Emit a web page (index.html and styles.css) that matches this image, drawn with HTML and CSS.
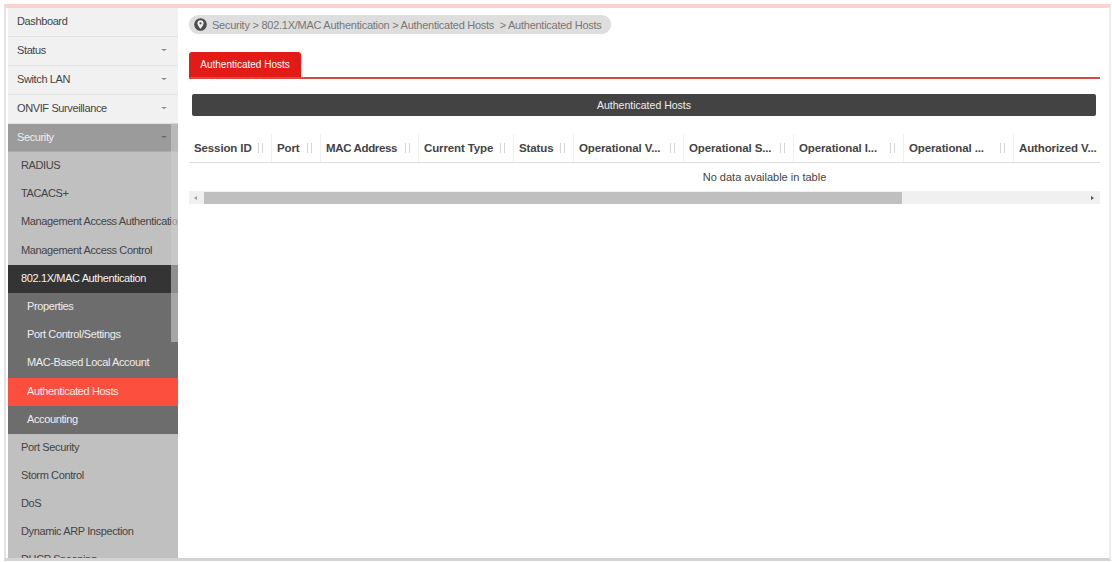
FILE: index.html
```html
<!DOCTYPE html>
<html lang="en">

<head>
    <meta charset="UTF-8">
    <meta name="viewport" content="width=device-width, initial-scale=1.0">
    <title>Authenticated Hosts</title>
    <link rel="stylesheet" href="styles.css">
</head>

<body>
    <div class="frame">
        <nav class="sidebar">
            <ul class="menu">
                <li><span>Dashboard</span></li>
                <li><span>Status</span><i class="caret"></i></li>
                <li><span>Switch LAN</span><i class="caret"></i></li>
                <li><span>ONVIF Surveillance</span><i class="caret"></i></li>
                <li class="open"><span>Security</span><i class="caret"></i></li>
            </ul>
            <ul class="submenu">
                <li>RADIUS</li>
                <li>TACACS+</li>
                <li>Management Access Authentication</li>
                <li>Management Access Control</li>
                <li class="current">802.1X/MAC Authentication</li>
                <li class="sub">Properties</li>
                <li class="sub">Port Control/Settings</li>
                <li class="sub">MAC-Based Local Account</li>
                <li class="sub active">Authenticated Hosts</li>
                <li class="sub">Accounting</li>
                <li>Port Security</li>
                <li>Storm Control</li>
                <li>DoS</li>
                <li>Dynamic ARP Inspection</li>
                <li class="last">DHCP Snooping</li>
            </ul>
            <div class="thumb"></div>
        </nav>

        <main class="content">
            <div class="crumbs">
                <svg width="13" height="13" viewBox="0 0 13 13">
                    <circle cx="6.5" cy="6.5" r="6.3" fill="#4c4c4c" />
                    <path d="M6.5 2.2a3.1 3.1 0 0 0-3.1 3.1c0 2.1 3.1 5.6 3.1 5.6s3.1-3.5 3.1-5.6a3.1 3.1 0 0 0-3.1-3.1z" fill="#eee" />
                    <circle cx="6.5" cy="5.3" r="1.1" fill="#4c4c4c" />
                </svg>
                <span>Security &gt; 802.1X/MAC Authentication &gt; Authenticated Hosts &nbsp;&gt; Authenticated Hosts</span>
            </div>

            <div class="tabs">
                <div class="tab">Authenticated Hosts</div>
            </div>

            <div class="title">Authenticated Hosts</div>

            <div class="table">
                <div class="head">
                    <div class="th c1">Session ID<i class="sort"></i></div>
                    <div class="th c2">Port<i class="sort"></i></div>
                    <div class="th c3">MAC Address<i class="sort"></i></div>
                    <div class="th c4">Current Type<i class="sort"></i></div>
                    <div class="th c5">Status<i class="sort"></i></div>
                    <div class="th c6">Operational V...<i class="sort"></i></div>
                    <div class="th c7">Operational S...<i class="sort"></i></div>
                    <div class="th c8">Operational I...<i class="sort"></i></div>
                    <div class="th c9">Operational ...<i class="sort"></i></div>
                    <div class="th c10">Authorized V...</div>
                </div>
                <div class="empty">No data available in table</div>
                <div class="scrollbar">
                    <i class="arrow left"></i>
                    <div class="bar"></div>
                    <i class="arrow right"></i>
                </div>
            </div>
        </main>
    </div>
</body>

</html>
```
FILE: styles.css
```css
body {
    margin: 0;
    background: #fff;
    font-family: "Liberation Sans", Arial, sans-serif;
    font-size: 11px;
    color: #444;
}

ul {
    list-style: none;
    margin: 0;
    padding: 0;
}

.frame {
    box-sizing: border-box;
    display: flex;
    width: 1107px;
    height: 557px;
    margin: 4px 0 0 4px;
    border: 2px solid #e2e2e2;
    border-top: 4px solid #fad2d2;
    border-bottom: 3px solid #d3d3d3;
    border-right-color: #ededed;
    overflow: hidden;
}

.sidebar {
    position: relative;
    flex: none;
    width: 170px;
    margin-left: 2px;
    background: #c0c0c0;
    overflow: hidden;
    white-space: nowrap;
    letter-spacing: -0.38px;
}

.menu li {
    box-sizing: border-box;
    display: flex;
    align-items: center;
    justify-content: space-between;
    height: 29px;
    padding: 0 11px 2px 9px;
    background: #f1f1f1;
    border-bottom: 1px solid #e3e3e3;
}

.menu .open {
    height: 28px;
    background: #9b9b9b;
    border-bottom-color: #aaa;
    color: #eee;
}

.caret {
    border: 3px solid transparent;
    border-top: 2px solid #888;
    border-bottom: 0;
}

.open .caret {
    border-top-color: #666;
}

.submenu li {
    height: 28.2px;
    line-height: 27px;
    padding-left: 13px;
}

.submenu .current {
    background: #343434;
    color: #f4f4f4;
}

.submenu .sub {
    padding-left: 19px;
    background: #6d6d6d;
    color: #eee;
}

.submenu .active {
    background: #fd4f3d;
}

.submenu .last {
    line-height: 25px;
}

/* scrollbar floats over the menu */
.thumb {
    position: absolute;
    top: 115px;
    right: 0;
    width: 7px;
    height: 219px;
    background: rgba(205, 205, 205, .6);
}

.content {
    flex: 1;
    min-width: 0;
    padding: 7px 9px 0 11px;
}

.crumbs {
    box-sizing: border-box;
    display: flex;
    align-items: center;
    gap: 5px;
    width: 422px;
    height: 19px;
    padding-left: 5px;
    border-radius: 9px;
    background: #dedede;
    color: #777;
    white-space: nowrap;
    letter-spacing: -0.26px;
}

.crumbs svg {
    flex: none;
}

.tabs {
    display: flex;
    margin-top: 18px;
    border-bottom: 2px solid #d94a42;
}

.tab {
    width: 112px;
    height: 25px;
    line-height: 26px;
    border-radius: 3px 3px 0 0;
    background: #e21b17;
    color: #fff;
    font-size: 10px;
    text-align: center;
}

.title {
    height: 22px;
    line-height: 22px;
    margin: 15px 4px 0 3px;
    border-radius: 2px;
    background: #434343;
    color: #eee;
    font-size: 10.5px;
    text-align: center;
}

.head {
    display: flex;
    height: 28px;
    margin-top: 18px;
    line-height: 27px;
    border-bottom: 1px solid #ddd;
    color: #444;
    font-size: 11.5px;
    font-weight: bold;
    letter-spacing: -0.12px;
}

.th {
    box-sizing: border-box;
    display: flex;
    flex: none;
    align-items: center;
    justify-content: space-between;
    padding: 0 8px 0 5px;
    border-right: 1px solid #f0f0f0;
    white-space: nowrap;
}

.c1 { width: 83px; }
.c2 { width: 49px; }
.c3 { width: 98px; letter-spacing: -0.35px; }
.c4 { width: 95px; }
.c5 { width: 60px; }
.c6 { width: 110px; }
.c7 { width: 110px; }
.c8 { width: 110px; }
.c9 { width: 110px; }
.c10 { width: 86px; padding-right: 0; border: 0; }

.sort {
    width: 3px;
    height: 10px;
    border: 1px solid #d6d6d6;
    border-width: 0 1px;
}

.empty {
    height: 28px;
    line-height: 29px;
    margin-left: 240px;
    text-align: center;
}

.scrollbar {
    display: flex;
    align-items: center;
    justify-content: space-between;
    height: 13px;
    padding: 0 6px 0 5px;
    background: #f0f0f0;
}

.bar {
    width: 698px;
    height: 12px;
    margin: 0 auto 0 7px;
    background: #bfbfbf;
}

.arrow {
    border: 2px solid transparent;
}

.left {
    border-right: 3px solid #999;
    border-left: 0;
}

.right {
    border-left: 3px solid #555;
    border-right: 0;
}
```
